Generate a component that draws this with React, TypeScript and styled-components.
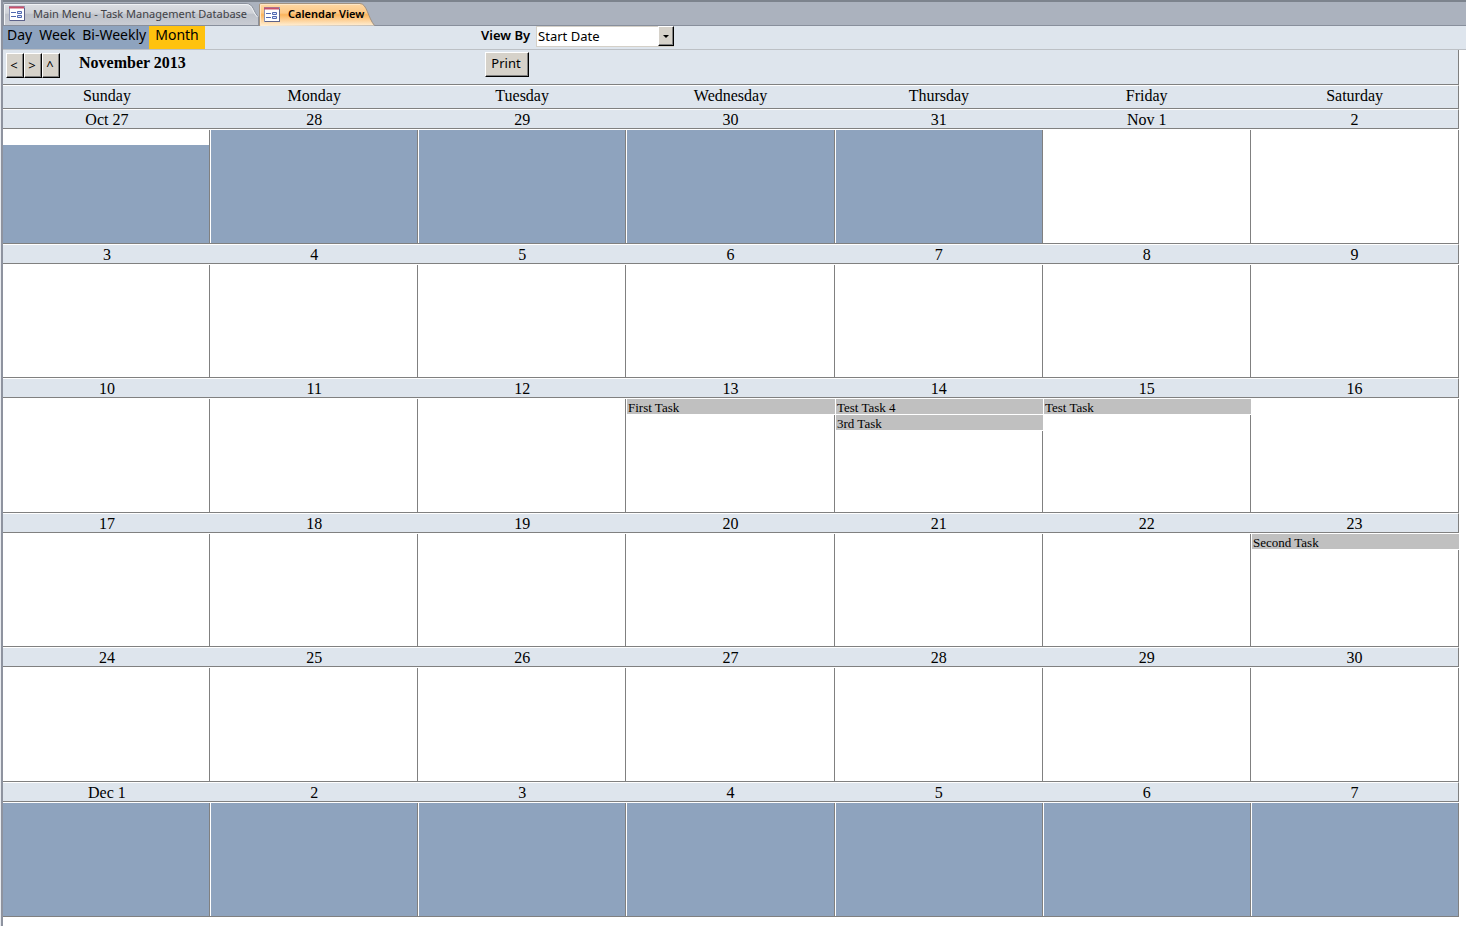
import React from 'react';
import styled, { createGlobalStyle } from 'styled-components';

const serif = '"Liberation Serif", "Times New Roman", serif';
const sans = '"Noto Sans", "Open Sans", sans-serif';
const line = '#808080';
const pale = '#dee5ed';
const slate = '#8ea3be';

const GlobalStyle = createGlobalStyle`
  *, *::before, *::after { box-sizing: border-box; }
  body { margin: 0; background: #fff; color: #000; font-family: ${sans}; }
  button, select { font-family: inherit; color: inherit; }
`;

const Frame = styled.main`
  min-height: 100vh;
  padding-left: 1px;
  background: #e8ebf0;
`;

const Pane = styled.div`
  min-height: 100vh;
  border-left: 2px solid #8e939f;
  background: #fff;
`;

const TabBar = styled.nav`
  display: flex;
  height: 26px;
  padding-top: 1px;
  border-top: 2px solid #7c838d;
  border-bottom: 1px solid #888f9c;
  background: #abb2be;
`;

const Tab = styled.button<{ $active?: boolean }>`
  position: relative;
  display: flex;
  align-items: center;
  gap: 8px;
  width: ${p => (p.$active ? 116 : 256)}px;
  height: ${p => (p.$active ? 23 : 22)}px;
  padding: 0 0 0 ${p => (p.$active ? 5 : 6)}px;
  border: 0;
  background: none;
  font-size: 11px;
  font-weight: ${p => (p.$active ? 600 : 400)};
  line-height: 16px;
  color: ${p => (p.$active ? '#000' : '#3f4146')};
  white-space: nowrap;
`;

const TabShape = styled.svg`
  position: absolute;
  inset: 0;
  width: 100%;
  height: 100%;
`;

const TabIcon = styled.svg`
  position: relative;
  flex: none;
`;

const TabText = styled.span`
  position: relative;
  padding-bottom: 1px;
`;

const Toolbar = styled.div`
  display: flex;
  height: 24px;
  border-bottom: 1px solid #bcc0c5;
  background: ${pale};
`;

const Modes = styled.div`
  display: flex;
  width: 478px;
`;

const Mode = styled.button<{ $on?: boolean }>`
  height: 23px;
  padding: 0 ${p => (p.$on ? 6 : 3)}px 6px ${p => (p.$on ? 6 : 4)}px;
  border: 0;
  background: ${p => (p.$on ? '#ffc20e' : slate)};
  font-size: 14px;
  line-height: 16px;
`;

const ViewLabel = styled.label`
  display: flex;
  gap: 6px;
  font-size: 13px;
  font-weight: 600;
  line-height: 18px;
`;

const SelectBox = styled.span`
  position: relative;
  display: flex;
  width: 138px;
  height: 21px;
`;

const ViewSelect = styled.select`
  appearance: none;
  width: 100%;
  height: 21px;
  padding: 0 18px 4px 1px;
  border: 1px solid #d4d0c8;
  border-radius: 0;
  background: #fff;
  font-size: 13px;
  font-weight: 400;
`;

const bevel = `
  border: 1px solid;
  border-color: #fff #000 #000 #fff;
  background: #d6d2ca;
`;

const SelectArrow = styled.span`
  ${bevel}
  position: absolute;
  top: 0;
  right: 0;
  display: flex;
  align-items: center;
  justify-content: center;
  width: 16px;
  height: 20px;
  box-shadow: inset -1px -1px #808080;
  pointer-events: none;
`;

const TitleBar = styled.header`
  display: flex;
  width: calc(100% - 7px);
  height: 35px;
  padding: 2px 0 0 3px;
  border-right: 1px solid ${line};
  border-bottom: 1px solid ${line};
  background: ${pale};
`;

const Steps = styled.div`
  display: flex;
  width: 73px;
  padding-top: 1px;
`;

const PushButton = styled.button<{ $wide?: boolean }>`
  ${bevel}
  width: ${p => (p.$wide ? 44 : 18)}px;
  height: 25px;
  padding: 0 2px ${p => (p.$wide ? 3 : 1)}px 0;
  box-shadow: inset -1px -1px #808080;
  font-size: 13px;
  line-height: 20px;
`;

const Title = styled.h1`
  width: 406px;
  margin: 0;
  font: bold 16px/22px ${serif};
`;

const Calendar = styled.table`
  display: block;
  width: calc(100% - 7px);
  border-spacing: 0;
  font-family: ${serif};
  font-size: 16px;

  thead, tbody { display: block; }
`;

const Row = styled.tr<{ $height: number; $head?: boolean }>`
  display: grid;
  grid-template-columns:
    minmax(0, 207fr) repeat(2, minmax(0, 208fr)) minmax(0, 209fr)
    repeat(3, minmax(0, 208fr));
  height: ${p => p.$height}px;
  border-top: 1px solid #fff;
  border-bottom: 1px solid ${line};
  border-right: ${p => (p.$head ? `1px solid ${line}` : '0')};
  background: ${p => (p.$head ? pale : '#fff')};
`;

const Heading = styled.th`
  padding: 0 0 0 1px;
  font-weight: 400;
  line-height: 20px;
  text-align: center;
`;

const Day = styled.td<{ $outside: boolean }>`
  padding: 0 0 0 1px;
  border-right: 1px solid ${line};
  background: ${p => (p.$outside ? slate : '#fff')};
  background-clip: content-box;

  &:first-child { padding-left: 0; }
`;

const Task = styled.div<{ $blank?: boolean }>`
  height: ${p => (p.$blank ? 15 : 16)}px;
  margin-right: ${p => (p.$blank ? 0 : -1)}px;
  padding-left: 1px;
  border-bottom: 1px solid #fff;
  background: ${p => (p.$blank ? '#fff' : '#c0c0c0')};
  font-size: 13px;
  line-height: 17px;
`;

const FormIcon = () => (
  <TabIcon width="16" height="16" viewBox="0 0 16 16" aria-hidden="true">
    <rect x="0.5" y="0.5" width="15" height="14" fill="#fff" stroke="#8f96b4" />
    <path d="M0 1.500h15" stroke="#c8506a" strokeWidth="2" />
    <path d="M15.500 2v13M1 14.500h15" stroke="#5c628a" />
    <path d="M2 6.500h5M2 10.500h5" stroke="#5068b0" />
    <path d="M8.500 5.500h4v2h-4zM8.500 9.500h4v2h-4z" fill="#dfe6fa" stroke="#5068b0" />
  </TabIcon>
);

type Week = { height: number; days: string[]; outside: number[] };

const weekdays = ['Sunday', 'Monday', 'Tuesday', 'Wednesday', 'Thursday', 'Friday', 'Saturday'];

const weeks: Week[] = [
  { height: 115, days: ['Oct 27', '28', '29', '30', '31', 'Nov 1', '2'], outside: [0, 1, 2, 3, 4] },
  { height: 114, days: ['3', '4', '5', '6', '7', '8', '9'], outside: [] },
  { height: 115, days: ['10', '11', '12', '13', '14', '15', '16'], outside: [] },
  { height: 114, days: ['17', '18', '19', '20', '21', '22', '23'], outside: [] },
  { height: 115, days: ['24', '25', '26', '27', '28', '29', '30'], outside: [] },
  { height: 115, days: ['Dec 1', '2', '3', '4', '5', '6', '7'], outside: [0, 1, 2, 3, 4, 5, 6] },
];

const tasks: Record<string, string[]> = {
  '0-0': [''],
  '2-3': ['First Task'],
  '2-4': ['Test Task 4', '3rd Task'],
  '2-5': ['Test Task'],
  '3-6': ['Second Task'],
};

export default function App() {
  return (
    <>
      <GlobalStyle />
      <Frame>
        <Pane>
          <TabBar>
            <Tab>
              <TabShape viewBox="0 0 256 22" preserveAspectRatio="none" aria-hidden="true">
                <defs>
                  <linearGradient id="tab-gray" x1="0" y1="0" x2="0" y2="1">
                    <stop offset="0" stopColor="#dcdfe4" />
                    <stop offset="0.45" stopColor="#cfd2d8" />
                    <stop offset="0.5" stopColor="#bdc1c9" />
                    <stop offset="1" stopColor="#c9ccd3" />
                  </linearGradient>
                </defs>
                <path d="M0.5 22V2Q0.5 0.5 2 0.5H243C251 0.5 250 9 255.5 14V22" fill="url(#tab-gray)" stroke="#8b919c" />
                <path d="M1.5 22V1.5H243C250 1.5 249 9 254.5 14" fill="none" stroke="#f0f2f5" />
              </TabShape>
              <FormIcon />
              <TabText>Main Menu - Task Management Database</TabText>
            </Tab>
            <Tab $active>
              <TabShape viewBox="0 0 116 23" preserveAspectRatio="none" aria-hidden="true">
                <defs>
                  <linearGradient id="tab-orange" x1="0" y1="0" x2="0" y2="1">
                    <stop offset="0" stopColor="#ffd9a6" />
                    <stop offset="0.42" stopColor="#fdc885" />
                    <stop offset="0.5" stopColor="#fbb45c" />
                    <stop offset="1" stopColor="#fff0d8" />
                  </linearGradient>
                </defs>
                <path d="M0.5 23V2Q0.5 0.5 2 0.5H101C108 0.5 109 15 115.5 22.5" fill="url(#tab-orange)" stroke="#a3927f" />
                <path d="M1.5 23V1.5H101" fill="none" stroke="#ffe7c4" />
              </TabShape>
              <FormIcon />
              <TabText>Calendar View</TabText>
            </Tab>
          </TabBar>
          <Toolbar>
            <Modes>
              <Mode>Day</Mode>
              <Mode>Week</Mode>
              <Mode>Bi-Weekly</Mode>
              <Mode $on>Month</Mode>
            </Modes>
            <ViewLabel>
              View By
              <SelectBox>
                <ViewSelect defaultValue="Start Date">
                  <option>Start Date</option>
                </ViewSelect>
                <SelectArrow>
                  <svg width="6" height="3" viewBox="0 0 6 3" aria-hidden="true">
                    <path d="M0 0h6L3 3z" />
                  </svg>
                </SelectArrow>
              </SelectBox>
            </ViewLabel>
          </Toolbar>
          <TitleBar>
            <Steps>
              <PushButton>&lt;</PushButton>
              <PushButton>&gt;</PushButton>
              <PushButton>^</PushButton>
            </Steps>
            <Title>November 2013</Title>
            <PushButton $wide>Print</PushButton>
          </TitleBar>
          <Calendar>
            <thead>
              <Row $height={24} $head>
                {weekdays.map(name => (
                  <Heading key={name} scope="col">{name}</Heading>
                ))}
              </Row>
            </thead>
            {weeks.map((week, w) => (
              <tbody key={w}>
                <Row $height={20} $head>
                  {week.days.map(day => (
                    <Heading key={day} scope="col">{day}</Heading>
                  ))}
                </Row>
                <Row $height={week.height}>
                  {week.days.map((day, d) => (
                    <Day key={day} $outside={week.outside.includes(d)}>
                      {(tasks[`${w}-${d}`] ?? []).map(name => (
                        <Task key={name} $blank={!name}>{name}</Task>
                      ))}
                    </Day>
                  ))}
                </Row>
              </tbody>
            ))}
          </Calendar>
        </Pane>
      </Frame>
    </>
  );
}
